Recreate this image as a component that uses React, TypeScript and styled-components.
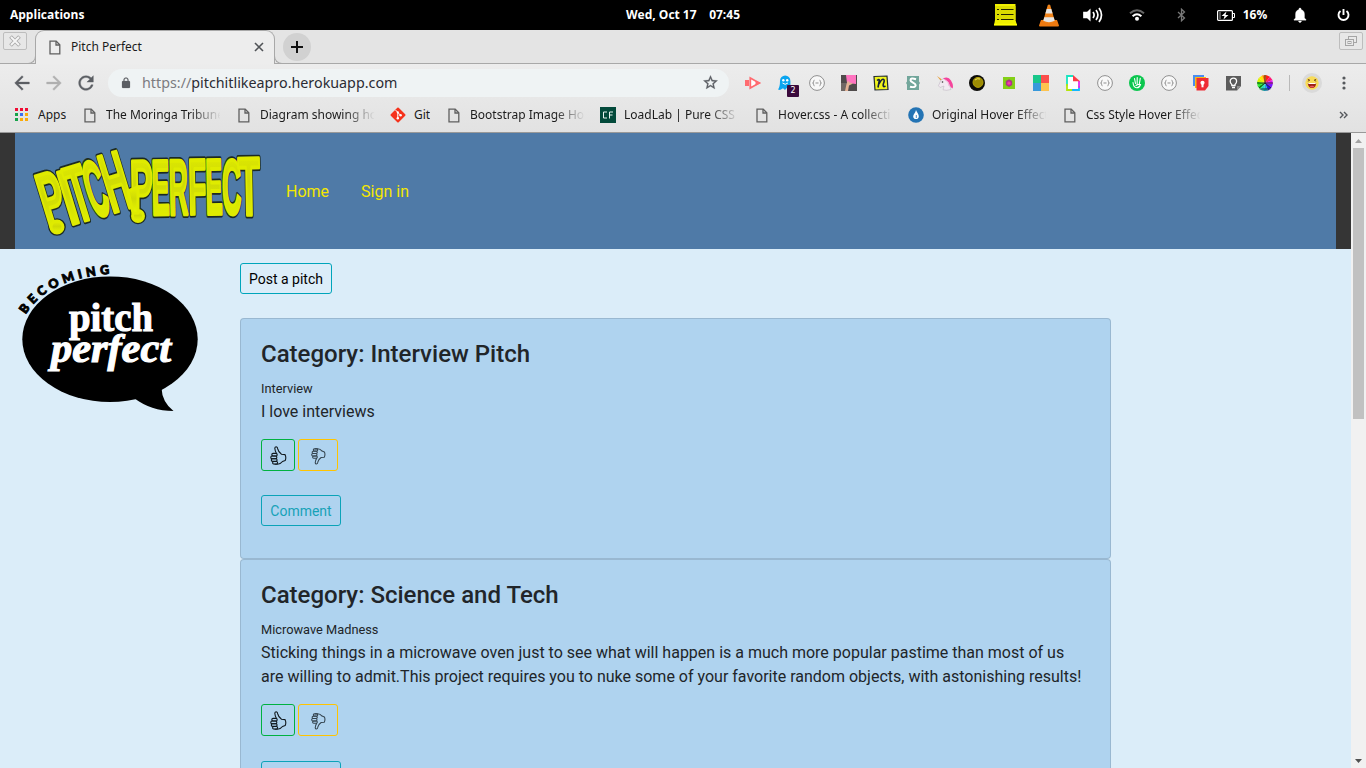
import React from "react";
import styled, { createGlobalStyle } from "styled-components";

const GlobalStyle = createGlobalStyle`
  *, *::before, *::after { box-sizing: border-box; }
  html, body { margin: 0; padding: 0; height: 768px; overflow: hidden; }
  body { font-family: Roboto, "Liberation Sans", sans-serif; font-size: 16px; line-height: 1.5; color: #212529; }
  svg { display: block; flex: none; }
  p, h4 { margin: 0; }
`;

const Screen = styled.div`
  width: 1366px;
  height: 768px;
  display: flex;
  flex-direction: column;
  overflow: hidden;
`;

/* ---------- desktop panel ---------- */

const Panel = styled.header`
  flex: none;
  height: 30px;
  display: grid;
  grid-template-columns: 1fr 114px 1fr;
  align-items: center;
  background: #000;
  color: #fff;
  font: 700 12px/30px "Open Sans", "Noto Sans", sans-serif;
`;
const PanelMenu = styled.div`
  padding-left: 10px;
`;
const Clock = styled.div`
  display: flex;
  justify-content: space-between;
  white-space: nowrap;
`;
const Tray = styled.div`
  display: flex;
  justify-content: flex-end;
`;
const TraySlot = styled.div<{ $w: number }>`
  width: ${(p) => p.$w}px;
  height: 30px;
  display: flex;
  align-items: center;
  justify-content: center;
  gap: 8px;
`;

/* ---------- browser chrome ---------- */

const Browser = styled.div`
  flex: none;
  height: 103px;
  background: linear-gradient(#ededed 30px, #e2e2e2);
  border-bottom: 1px solid #999;
  font-family: "Noto Sans", "Open Sans", sans-serif;
  color: #1b1b1b;
`;
const TabStrip = styled.div`
  height: 34px;
  display: flex;
  background: #e4e4e4;
  border-bottom: 1px solid #a8a8a8;
`;
const WindowButton = styled.div`
  width: 24px;
  height: 18px;
  margin: 2px 3px 0;
  border: 1px solid #bdbdbd;
  border-radius: 2px;
  display: flex;
  align-items: center;
  justify-content: center;
  background: #e7e7e7;
`;
const Tab = styled.div`
  position: relative;
  width: 240px;
  height: 34px;
  margin-left: 5px;
  padding: 0 10px 1px 13px;
  display: flex;
  align-items: center;
  border: 1px solid #a8a8a8;
  border-bottom: 0;
  border-radius: 9px 9px 0 0;
  background: #ededed;
  font-size: 12px;

  &::before,
  &::after {
    content: "";
    position: absolute;
    bottom: 0;
    width: 8px;
    height: 8px;
    border-bottom: 1px solid #a8a8a8;
    background: transparent;
  }
  &::before {
    left: -8px;
    border-right: 1px solid #a8a8a8;
    border-bottom-right-radius: 8px;
  }
  &::after {
    right: -8px;
    border-left: 1px solid #a8a8a8;
    border-bottom-left-radius: 8px;
  }
`;
const TabTitle = styled.span`
  flex: 1;
  margin-left: 10px;
`;
const NewTab = styled.div`
  width: 28px;
  height: 28px;
  margin: 3px auto 0 8px;
  border-radius: 50%;
  background: #d1d1d1;
  display: flex;
  align-items: center;
  justify-content: center;
`;
const Toolbar = styled.div`
  height: 37px;
  display: flex;
  align-items: center;
`;
const NavButtons = styled.div`
  width: 108px;
  padding-left: 11px;
  display: flex;
  gap: 10px;
`;
const AddressBar = styled.div`
  width: 621px;
  height: 28px;
  margin-right: 8px;
  padding: 0 10px 0 12px;
  border-radius: 14px;
  background: #eff3f4;
  display: flex;
  align-items: center;
  font-size: 14.3px;
  line-height: 28px;
`;
const Url = styled.span`
  flex: 1;
  margin-left: 10px;
  white-space: nowrap;
  color: #2b2b33;
  i {
    font-style: normal;
    color: #7b7b80;
  }
`;
const Extension = styled.div`
  position: relative;
  width: 32px;
  height: 28px;
  display: flex;
  align-items: center;
  justify-content: center;
`;
const Badge = styled.span`
  position: absolute;
  left: 18px;
  top: 16px;
  width: 12px;
  height: 12px;
  border-radius: 1px;
  background: #3a0a3c;
  color: #fff;
  font: 8px/12px "DejaVu Sans", sans-serif;
  text-align: center;
`;
const Divider = styled.div`
  width: 1px;
  height: 16px;
  margin-left: 8px;
  background: #b9b9b9;
`;
const Avatar = styled.div`
  width: 20px;
  height: 20px;
  margin: 0 20px 0 12px;
  border-radius: 50%;
  background: #dadada;
  display: flex;
  align-items: center;
  justify-content: center;
`;
const Bookmarks = styled.div`
  height: 28px;
  padding: 0 18px 0 14px;
  display: flex;
  align-items: center;
  gap: 16px;
`;
const Bookmark = styled.div<{ $w: number; $fade?: boolean }>`
  display: flex;
  align-items: center;
  gap: 8px;
  span {
    width: ${(p) => p.$w}px;
    overflow: hidden;
    white-space: nowrap;
    font-size: 12px;
    line-height: 20px;
    ${(p) => p.$fade && "mask-image: linear-gradient(to right, #000 84px, transparent 115px);"}
  }
`;
const BookmarkIcon = styled.div`
  width: 16px;
  display: flex;
  justify-content: center;
`;
const More = styled.div`
  margin-left: auto;
`;

/* ---------- web page ---------- */

const Viewport = styled.div`
  flex: 1;
  min-height: 0;
  display: flex;
`;
const Page = styled.div`
  width: 1351px;
  overflow: hidden;
  background: #dbedf9;
`;
const NavFrame = styled.div`
  padding: 0 15px;
  background: #353535;
`;
const Navbar = styled.nav`
  height: 116px;
  padding-left: 16px;
  display: flex;
  align-items: center;
  background: #4f7aa7;
`;
const NavLink = styled.a`
  margin-left: 32px;
  padding-top: 2px;
  color: #f5e700;
`;
const Content = styled.main`
  display: flex;
`;
const Side = styled.aside`
  width: 240px;
`;
const Pitches = styled.section`
  width: 871px;
  padding-top: 14px;
`;
const Button = styled.button<{ $border: string; $color?: string; $w?: number }>`
  display: block;
  width: ${(p) => p.$w}px;
  height: 31px;
  padding: 2px 0 0;
  border: 1px solid ${(p) => p.$border};
  border-radius: 3px;
  background: transparent;
  color: ${(p) => p.$color ?? "#000"};
  font: 400 14px/21px Roboto, sans-serif;
`;
const VoteButton = styled(Button)`
  height: 32.3px;
  padding: 1px 0 0;
  display: flex;
  align-items: center;
  justify-content: center;
`;
const Card = styled.article`
  height: 241.1px;
  padding: 21px 20px 20px;
  border: 1px solid rgba(0, 0, 0, 0.125);
  border-radius: 4px;
  background: #afd3ef;
  & + & {
    height: 265px;
  }
`;
const CardList = styled.div`
  margin-top: 24.4px;
`;
const Title = styled.h4`
  margin-bottom: 8px;
  font-size: 24px;
  font-weight: 500;
  line-height: 28.8px;
`;
const Subject = styled.p`
  height: 23px;
  font-size: 12.8px;
  line-height: 24px;
`;
const Votes = styled.div`
  display: flex;
  gap: 3px;
  margin: 14.9px 0 24.05px;
`;

const ScrollTrack = styled.div`
  width: 15px;
  background: #f1f1f1;
  display: flex;
  flex-direction: column;
  align-items: center;
`;
const ScrollArrow = styled.div`
  height: 15px;
  display: flex;
  align-items: center;
`;
const ScrollThumb = styled.div`
  width: 11px;
  height: 271px;
  margin-bottom: auto;
  background: #c1c1c1;
`;

/* ---------- drawings ---------- */

const Glyph = ({ d, size, fill = "#5b5e63" }: { d: string; size: number; fill?: string }) => (
  <svg width={size} height={size} viewBox="0 0 24 24">
    <path d={d} fill={fill} stroke={fill} strokeWidth="0.4" />
  </svg>
);

const PATHS = {
  back: "M20 11H7.83l5.59-5.59L12 4l-8 8 8 8 1.41-1.41L7.83 13H20v-2z",
  forward: "M12 4l-1.41 1.41L16.17 11H4v2h12.17l-5.58 5.59L12 20l8-8z",
  reload:
    "M17.65 6.35C16.2 4.9 14.21 4 12 4c-4.42 0-7.99 3.58-7.99 8s3.57 8 7.99 8c3.73 0 6.84-2.55 7.73-6h-2.08c-.82 2.33-3.04 4-5.65 4-3.31 0-6-2.69-6-6s2.69-6 6-6c1.66 0 3.14.69 4.22 1.78L13 11h7V4l-2.35 2.35z",
  lock: "M18 8h-1V6c0-2.76-2.24-5-5-5S7 3.24 7 6v2H6c-1.1 0-2 .9-2 2v10c0 1.1.9 2 2 2h12c1.1 0 2-.9 2-2V10c0-1.1-.9-2-2-2zM15.1 8H8.9V6c0-1.71 1.39-3.1 3.1-3.1s3.1 1.39 3.1 3.1v2z",
  star: "M22 9.24l-7.19-.62L12 2 9.19 8.63 2 9.24l5.46 4.73L5.82 21 12 17.27 18.18 21l-1.63-7.03L22 9.24zM12 15.4l-3.76 2.27 1-4.28-3.32-2.88 4.38-.38L12 6.1l1.71 4.04 4.38.38-3.32 2.88 1 4.28L12 15.4z",
  bell: "M12 22c1.1 0 2-.9 2-2h-4c0 1.1.89 2 2 2zm6-6v-5c0-3.07-1.64-5.64-4.5-6.32V4c0-.83-.67-1.5-1.5-1.5s-1.5.67-1.5 1.5v.68C7.63 5.36 6 7.92 6 11v5l-2 2v1h16v-1l-2-2z",
};

const FileIcon = () => (
  <svg width="12" height="15" viewBox="0 0 12 15" fill="none" stroke="#5f5f5f" strokeWidth="1.3">
    <path d="M1 1.2h6.2l3.6 3.6v9H1z" />
    <path d="M7 1.2v3.8h3.8" />
  </svg>
);

const AppsIcon = () => (
  <svg width="14" height="14" viewBox="0 0 14 14" shapeRendering="crispEdges">
    {["#f00c34", "#f00c34", "#f00c34", "#17a34a", "#3c6ff0", "#fbab09", "#17a34a", "#fbab09", "#fbab09"].map((c, i) => (
      <rect key={i} x={(i % 3) * 5} y={Math.floor(i / 3) * 5} width="3" height="3" fill={c} />
    ))}
  </svg>
);

const GitIcon = () => (
  <svg width="16" height="16" viewBox="0 0 16 16">
    <rect x="2.4" y="2.4" width="11.2" height="11.2" rx="1" fill="#f5321c" transform="rotate(45 8 8)" />
    <path d="M5.5 3l2.3 2.4v6M7.8 5.6l2.8 2.6" stroke="#fff" fill="none" />
    <circle cx="7.8" cy="11.2" r="1.2" fill="#fff" />
    <circle cx="10.6" cy="8.2" r="1.2" fill="#fff" />
    <circle cx="7.8" cy="5.3" r="1.1" fill="#fff" />
  </svg>
);

const CfIcon = () => (
  <svg width="16" height="16" viewBox="0 0 16 16">
    <rect width="16" height="16" fill="#034a3b" />
    <path d="M7 5H3.5v6H7M9.5 11.5V5H13M9.5 8H12.5" stroke="#e7f2ef" fill="none" />
  </svg>
);

const DropIcon = () => (
  <svg width="16" height="16" viewBox="0 0 16 16">
    <circle cx="8" cy="8" r="7.8" fill="#2474b4" />
    <path d="M8 3C9 5.500 10.800 7 10.800 9.300a2.800 2.800 0 0 1-5.600 0C5.200 7.500 7.500 6 8 3z" fill="#fff" />
    <path d="M8.300 8v3" stroke="#2474b4" strokeWidth="0.8" />
  </svg>
);

const BracesIcon = () => (
  <svg width="16" height="16" viewBox="0 0 16 16" fill="none" stroke="#8f8f8f">
    <circle cx="8" cy="8" r="7.4" fill="#f8f8f8" />
    <path d="M5.500 5.200Q4.500 5.200 4.600 6.700Q4.600 8 3.600 8Q4.600 8 4.600 9.300Q4.500 10.800 5.500 10.800M10.500 5.200Q11.500 5.200 11.400 6.700Q11.400 8 12.400 8Q11.400 8 11.400 9.300Q11.500 10.800 10.500 10.800M6.500 8h3" />
  </svg>
);

const extensionIcons: React.ReactNode[] = [
  <svg width="16" height="14" viewBox="0 0 16 14">
    <path d="M0 4h4v6H0z" fill="#ff6b70" />
    <path d="M5.300 2l9 5-9 5z" fill="#fff" stroke="#ff6b70" strokeWidth="1.8" />
    <path d="M10.500 4.500L16 7l-5.500 2.800z" fill="#ff6b70" />
  </svg>,
  <svg width="16" height="16" viewBox="0 0 16 16">
    <path d="M3 15l-2-.6Q3 12 3 6a5.200 5.500 0 0 1 10.400 0v7l-2 2-1.700-2-1.700 2-2-1.700z" fill="#0aa5f0" />
    <circle cx="6.300" cy="5.200" r="1.2" fill="#fff" />
    <circle cx="10.200" cy="5.200" r="1.2" fill="#fff" />
    <path d="M5.500 8q2.700 2.600 5.400 0" stroke="#fff" fill="none" />
  </svg>,
  <BracesIcon />,
  <svg width="16" height="16" viewBox="0 0 16 16">
    <rect width="16" height="16" fill="#4f4a4b" />
    <path d="M0 8h6L7 16H0z" fill="#6f6764" />
    <path d="M5 0h10v9l-9-1z" fill="#ff74c0" />
    <path d="M4 16l1.500-7L7 5.500l1.500 2 3.500 1-4 2L7 16z" fill="#e3b296" />
  </svg>,
  <svg width="16" height="16" viewBox="0 0 16 16">
    <path d="M1 1.500L14 1l1 13.500-13 .5z" fill="#f0f51c" stroke="#232b30" strokeWidth="1.2" />
    <path d="M4 5.500Q6.500 3.500 6.300 5.500L5 12.500M6 9Q8.500 4 10.300 4.300T10.300 9Q9.500 12.800 12.500 11" fill="none" stroke="#15203a" strokeWidth="1.6" />
  </svg>,
  <svg width="14" height="16" viewBox="0 0 14 16">
    <path d="M1 1h12v5.500L14 8l-1 1.500V15H1V9.500L0 8l1-1.500z" fill="#72a69b" />
    <path d="M10 4.200Q4.500 2.500 4.500 5.200C4.500 7.500 9.700 7.700 9.700 10.300Q9.500 13 4 11.700" stroke="#fff" strokeWidth="2" fill="none" />
  </svg>,
  <svg width="16" height="16" viewBox="0 0 16 16">
    <path d="M0 1l5 3.500-1.500 1z" fill="#e8a13c" />
    <path d="M4 5l3-1.500 4 3 3 8q-5 1.500-8 .3L7 11l-4 1.500-1.500-1.800z" fill="#f2e9f1" stroke="#b9aebd" strokeWidth=".5" />
    <path d="M6 3.500Q11 .5 14 5.500T15.500 13.500Q13.500 13 12.500 9.500T6 3.500z" fill="#f5459c" />
    <path d="M8 5Q12 6 12 11" stroke="#f7b5dd" fill="none" />
    <circle cx="5.500" cy="7" r=".8" fill="#333" />
  </svg>,
  <svg width="16" height="16" viewBox="0 0 16 16">
    <circle cx="8" cy="8" r="8" fill="#0b0b08" />
    <circle cx="9" cy="7.400" r="5" fill="#9c8c04" stroke="#b3a008" />
    <path d="M6 5Q8 3 11 4" stroke="#eee261" fill="none" />
  </svg>,
  <svg width="12" height="12" viewBox="0 0 12 12">
    <rect width="12" height="12" fill="#83d016" />
    <path d="M6 2.200L9.200 4v4L6 10 2.800 8V4z" fill="#a63d7e" />
    <circle cx="6" cy="6.300" r="2.100" fill="#e824b0" />
    <circle cx="6" cy="6" r="0.6" fill="#ffd34a" />
  </svg>,
  <svg width="16" height="16" viewBox="0 0 16 16">
    <path d="M0 0h8v8H0z" fill="#18c78a" />
    <path d="M8 0h8v8H8z" fill="#fb504d" />
    <path d="M0 8h8v8H0z" fill="#3798db" />
    <path d="M8 8h8v8H8z" fill="#fdc34f" />
  </svg>,
  <svg width="14" height="16" viewBox="0 0 14 16">
    <path d="M1 1h7l5 5v9H1z" fill="#fff" />
    <path d="M1 11V1h6" stroke="#18e5c0" strokeWidth="1.8" fill="none" />
    <path d="M1 9v6h5" stroke="#b4e50c" strokeWidth="1.8" fill="none" />
    <path d="M6 15h7v-4" stroke="#12b8ff" strokeWidth="1.8" fill="none" />
    <path d="M13 13V6" stroke="#e528ef" strokeWidth="1.8" />
    <path d="M7 0l7 6.200H7z" fill="#fc3b45" />
  </svg>,
  <BracesIcon />,
  <svg width="16" height="16" viewBox="0 0 16 16">
    <circle cx="8" cy="8" r="8" fill="#0bc64e" />
    <path d="M5.500 3.500l1 5M8.200 2.500v6M11.300 3.200l-1 6M4 7.500Q4.500 12.500 7.500 12.700T11.500 9.500Q8.500 9 7 10.500" stroke="#fff" strokeWidth="1.1" fill="none" strokeLinecap="round" />
  </svg>,
  <BracesIcon />,
  <svg width="16" height="16" viewBox="0 0 16 16">
    <path d="M0 0h11v11H0z" fill="#4a8df0" />
    <path d="M2 2h11v11H2z" fill="#fbb715" />
    <path d="M3.500 3H15.500v8l-3.500 4.500H3.500z" fill="#ee2c35" />
    <circle cx="9.500" cy="7.800" r="2.1" fill="#fff" />
    <path d="M8.500 9h2v3.300h-2z" fill="#fff" />
  </svg>,
  <svg width="16" height="16" viewBox="0 0 16 16">
    <path d="M1 1h15v10l-4 4.500H1z" fill="#5c5c5c" />
    <path d="M16 11l-4 4.500V11z" fill="#8f8f8f" />
    <path d="M6.800 9.500Q5.200 8.200 5.200 6.300a3.200 3.200 0 0 1 6.400 0q0 1.900-1.600 3.200v1H6.800zM7 12.500h3" fill="none" stroke="#fff" strokeWidth="1.3" />
  </svg>,
  <svg width="16" height="16" viewBox="0 0 16 16">
    {["#ff1a1a", "#ff1478", "#e015f5", "#7a14ff", "#2418e8", "#12a8d8", "#1fd8c0", "#12d62c", "#27e81b", "#d5f500", "#ffe600", "#ff7b00"].map((c, i) => {
      const a = (i * Math.PI) / 6 - Math.PI / 2.2;
      const b = a + Math.PI / 6;
      return <path key={i} d={`M8 8L${8 + 8 * Math.cos(a)} ${8 + 8 * Math.sin(a)}L${8 + 8 * Math.cos(b)} ${8 + 8 * Math.sin(b)}z`} fill={c} />;
    })}
    <path d="M8 8L2 13M8 8l6 5M8 8V0M8 8H0M8 8h8" stroke="#161616" strokeWidth=".8" />
    <path d="M2 14l3 1.500h6l3-1.500-3-1H5z" fill="#222" opacity=".45" />
  </svg>,
];

const Emoji = () => (
  <svg width="14" height="14" viewBox="0 0 14 14">
    <circle cx="7" cy="7" r="6.7" fill="#f8dc58" />
    <path d="M2.800 3.300l2 .9-2 1M11.200 3.300l-2 .9 2 1" stroke="#6b3b12" fill="none" strokeWidth=".9" />
    <path d="M2.800 7h8.400q-.3 5-4.200 5T2.800 7z" fill="#9c2317" />
    <path d="M3.300 7h7.400v1H3.300z" fill="#fff" />
    <path d="M4.500 10.500q2.500-1.500 5 0-2.500 2-5 0z" fill="#f05a5e" />
  </svg>
);

const NotesIcon = () => (
  <svg width="23" height="22" viewBox="0 0 23 22">
    <path d="M1 0h20.500v16l1.500 5.500H0L1 16z" fill="#f0f000" />
    <path d="M1 2h20.500v14H1z" fill="#dcdc00" />
    <path d="M3 5.500h2M7 5.500h12.500M3 10.500h2M7 10.500h12.500M3 15.500h2M7 15.500h12.500" stroke="#222200" strokeWidth="1.2" />
    <path d="M0 20.500h23" stroke="#ff0" strokeWidth="1.5" />
  </svg>
);
const ConeIcon = () => (
  <svg width="20" height="23" viewBox="0 0 20 23">
    <path d="M2 16h16l2 5.500q0 1-1 1H1q-1 0-1-1z" fill="#ee7a10" />
    <path d="M8.800 1q1.200-1 2.400 0L16 17.500q-6 3.500-12 0z" fill="#f08218" />
    <path d="M7.700 5h4.600l1.300 4.500H6.400zM5.300 13.200h9.400l1 3.600q-5.700 2.700-11.400 0z" fill="#e6e6e6" />
  </svg>
);
const VolumeIcon = () => (
  <svg width="20" height="16" viewBox="0 0 20 16" fill="none" stroke="#fff" strokeWidth="1.7">
    <path d="M1 5.500h2.500L7.500 1.500v13L3.500 10.500H1z" fill="#fff" stroke="none" />
    <path d="M1 5.500v5h3v-5z" fill="#fff" />
    <path d="M10 5q2.200 3 0 6M13 3q3.800 5 0 10M16 1q5 7 0 14" />
  </svg>
);
const WifiIcon = () => (
  <svg width="16" height="12" viewBox="0 0 16 12" fill="none" strokeWidth="2">
    <path d="M1 4.300Q8-1.800 15 4.300" stroke="#666" />
    <path d="M3.600 7.200Q8 3.400 12.400 7.200" stroke="#fff" />
    <circle cx="8" cy="9.700" r="2" fill="#fff" />
  </svg>
);
const BluetoothIcon = () => (
  <svg width="9" height="14" viewBox="0 0 9 14" fill="none" stroke="#777" strokeWidth="1.3">
    <path d="M1 4l6.500 6L4.500 12.800V1.200L7.500 4 1 10" />
  </svg>
);
const BatteryIcon = () => (
  <svg width="18" height="11" viewBox="0 0 18 11">
    <rect x=".6" y=".6" width="14.8" height="9.8" rx="1" fill="none" stroke="#fff" strokeWidth="1.2" />
    <path d="M16 3.500h1.500v4H16" stroke="#fff" fill="none" />
    <path d="M2 2h2v7H2z" fill="#555" />
    <path d="M9.500 1.500L4.500 6h3L6.500 9.500 11.500 5h-3z" fill="#fff" />
  </svg>
);
const PowerIcon = () => (
  <svg width="13" height="14" viewBox="0 0 13 14" fill="none" stroke="#fff" strokeWidth="1.9">
    <path d="M3.500 3a5 5 0 1 0 6 0M6.500 1v6" />
  </svg>
);

/* letter, lower-left corner (x, y), rotation, horizontal and vertical scale */
const letters: [string, number, number, number, number, number][] = [
  ["P", 48, 95, -17, 0.46, 0.99],
  ["I", 70, 92, -17, 0.56, 1],
  ["T", 77, 90, -17, 0.43, 1.03],
  ["C", 94, 85, -17, 0.35, 1.02],
  ["H", 112, 80, -17, 0.44, 1.07],
  ["P", 130.5, 81.5, -1, 0.44, 0.99],
  ["E", 152, 81.5, -1, 0.345, 0.99],
  ["R", 169.2, 81.5, -1, 0.34, 1],
  ["F", 188.8, 81, -1, 0.38, 1],
  ["E", 206, 81, -1, 0.325, 1],
  ["C", 222.5, 81, -1, 0.34, 0.99],
  ["T", 238.5, 82, -1, 0.46, 1.05],
];

const LetterLayer = ({ stroke, width, fill }: { stroke: string; width: number; fill: string }) => (
  <g fill={fill} stroke={stroke} strokeWidth={width} strokeLinejoin="round" fontFamily="Liberation Sans, sans-serif" fontWeight="700" fontSize="78">
    {letters.map(([ch, x, y, r, sx, sy], i) => (
      <text key={i} transform={`translate(${x} ${y}) rotate(${r}) scale(${sx} ${sy})`} vectorEffect="non-scaling-stroke">
        {ch}
      </text>
    ))}
    <circle cx="57" cy="94" r="6" />
    <circle cx="138" cy="83" r="5.500" />
    <path d="M128 58l10-4v26h-5z" />
  </g>
);

const BrandLogo = () => (
  <svg width="223" height="116" viewBox="0 0 223 116" overflow="visible">
    <defs>
      <linearGradient id="gold" x1="0" y1="0" x2="0" y2="1">
        <stop offset="0" stopColor="#e4ef00" />
        <stop offset=".45" stopColor="#cfda05" />
        <stop offset="1" stopColor="#e6f700" />
      </linearGradient>
    </defs>
    <g transform="translate(-31 0)">
      <LetterLayer stroke="#1c2a22" width={5.6} fill="#1c2a22" />
      <LetterLayer stroke="#dfeb00" width={3} fill="url(#gold)" />
    </g>
  </svg>
);

const BubbleLogo = () => (
  <svg width="240" height="180" viewBox="0 249 240 180">
    <defs>
      <path id="arc" d="M25.500 314.500C40 292 66 276 116 273.500" />
    </defs>
    <ellipse cx="110" cy="339.200" rx="87.700" ry="62.800" />
    <path d="M134 398Q151 411 173.500 411Q162 402 161.500 388z" />
    <text fontFamily="Lato, sans-serif" fontWeight="900" fontSize="12.500" stroke="#000" strokeWidth=".9">
      <textPath href="#arc" textLength="97" lengthAdjust="spacing">
        BECOMING
      </textPath>
    </text>
    <g fill="#fff" stroke="#fff" strokeWidth="1.100" fontFamily="Liberation Serif, serif" fontWeight="700" fontSize="40">
      <text x="69" y="330.500" textLength="84" lengthAdjust="spacingAndGlyphs">
        pitch
      </text>
      <text x="51" y="361.500" fontStyle="italic" textLength="120" lengthAdjust="spacingAndGlyphs">
        perfect
      </text>
    </g>
  </svg>
);

const Thumb = () => (
  <>
    <path d="M6.500 7.500Q5 5 4.800 2.200Q5 .8 6.200.8Q7.600 1 7.800 3.200Q8.300 6 11.500 8.200L15 8.600Q16.500 11.500 15.200 14.500L12.500 15.500Q10.500 18.200 7.500 18.200H4.500" />
    <rect x="1.800" y="7.400" width="5.400" height="2.600" rx="1.300" />
    <rect x=".8" y="10" width="6" height="2.700" rx="1.300" />
    <rect x="1.300" y="12.800" width="5.800" height="2.600" rx="1.300" />
    <rect x="2.600" y="15.500" width="5" height="2.500" rx="1.200" />
  </>
);
const ThumbUp = () => (
  <svg width="17" height="19" viewBox="0 0 17 19" fill="none" stroke="#10181e" strokeWidth="1.1" strokeLinejoin="round">
    <Thumb />
  </svg>
);
const ThumbDown = () => (
  <svg width="15" height="19" viewBox="0 0 17 19" fill="none" stroke="#34444f" strokeWidth="1.2" strokeLinejoin="round">
    <g transform="matrix(1 0 0 -1 0 20)">
      <Thumb />
    </g>
  </svg>
);

/* ---------- content ---------- */

const bookmarks: { label: string; icon: React.ReactNode; w: number }[] = [
  { label: "Apps", icon: <AppsIcon />, w: 28 },
  { label: "The Moringa Tribune", icon: <FileIcon />, w: 114 },
  { label: "Diagram showing how", icon: <FileIcon />, w: 114 },
  { label: "Git", icon: <GitIcon />, w: 16 },
  { label: "Bootstrap Image Hove", icon: <FileIcon />, w: 114 },
  { label: "LoadLab | Pure CSS L", icon: <CfIcon />, w: 114 },
  { label: "Hover.css - A collecti", icon: <FileIcon />, w: 114 },
  { label: "Original Hover Effect", icon: <DropIcon />, w: 114 },
  { label: "Css Style Hover Effec", icon: <FileIcon />, w: 114 },
];

const pitches = [
  { category: "Interview Pitch", subject: "Interview", text: "I love interviews" },
  {
    category: "Science and Tech",
    subject: "Microwave Madness",
    text: "Sticking things in a microwave oven just to see what will happen is a much more popular pastime than most of us are willing to admit.This project requires you to nuke some of your favorite random objects, with astonishing results!",
  },
];

export default function App() {
  return (
    <Screen>
      <GlobalStyle />
      <Panel>
        <PanelMenu>Applications</PanelMenu>
        <Clock>
          <span>Wed, Oct 17</span>
          <span>07:45</span>
        </Clock>
        <Tray>
          <TraySlot $w={46}><NotesIcon /></TraySlot>
          <TraySlot $w={42}><ConeIcon /></TraySlot>
          <TraySlot $w={46}><VolumeIcon /></TraySlot>
          <TraySlot $w={42}><WifiIcon /></TraySlot>
          <TraySlot $w={46}><BluetoothIcon /></TraySlot>
          <TraySlot $w={76}><BatteryIcon />16%</TraySlot>
          <TraySlot $w={40}><Glyph d={PATHS.bell} size={18} fill="#fff" /></TraySlot>
          <TraySlot $w={46}><PowerIcon /></TraySlot>
        </Tray>
      </Panel>

      <Browser>
        <TabStrip>
          <WindowButton>
            <svg width="12" height="12" viewBox="0 0 12 12" fill="none">
              <path d="M1.500 1.500l9 9M10.500 1.500l-9 9" stroke="#aaa" strokeWidth="3.8" />
              <path d="M2 2l8 8M10 2L2 10" stroke="#f6f6f6" strokeWidth="1.9" />
            </svg>
          </WindowButton>
          <Tab>
            <FileIcon />
            <TabTitle>Pitch Perfect</TabTitle>
            <svg width="10" height="10" viewBox="0 0 10 10"><path d="M1 1l8 8M9 1L1 9" stroke="#505357" strokeWidth="1.6" /></svg>
          </Tab>
          <NewTab>
            <svg width="12" height="12" viewBox="0 0 12 12"><path d="M6 0v12M0 6h12" stroke="#111" strokeWidth="2" /></svg>
          </NewTab>
          <WindowButton>
            <svg width="12" height="12" viewBox="0 0 12 12" fill="#e9e9e9" stroke="#a5a5a5">
              <rect x="3.500" y="1.500" width="8" height="6" />
              <rect x=".5" y="4.500" width="8" height="6" />
              <rect x="3" y="6.500" width="3" height="2" />
            </svg>
          </WindowButton>
        </TabStrip>
        <Toolbar>
          <NavButtons>
            <Glyph d={PATHS.back} size={22} />
            <Glyph d={PATHS.forward} size={22} fill="#b0b0b0" />
            <Glyph d={PATHS.reload} size={22} />
          </NavButtons>
          <AddressBar>
            <Glyph d={PATHS.lock} size={12} />
            <Url><i>https://</i>pitchitlikeapro.herokuapp.com</Url>
            <Glyph d={PATHS.star} size={17} />
          </AddressBar>
          {extensionIcons.map((icon, i) => (
            <Extension key={i}>
              {icon}
              {i === 1 && <Badge>2</Badge>}
            </Extension>
          ))}
          <Divider />
          <Avatar><Emoji /></Avatar>
          <svg width="4" height="14" viewBox="0 0 4 14" fill="#55585c">
            <circle cx="2" cy="2" r="1.6" /><circle cx="2" cy="7" r="1.6" /><circle cx="2" cy="12" r="1.6" />
          </svg>
        </Toolbar>
        <Bookmarks>
          {bookmarks.map((b) => (
            <Bookmark key={b.label} $w={b.w} $fade={b.w > 100}>
              <BookmarkIcon>{b.icon}</BookmarkIcon>
              <span>{b.label}</span>
            </Bookmark>
          ))}
          <More>
            <svg width="9" height="8" viewBox="0 0 9 8" fill="none" stroke="#55585c" strokeWidth="1.4"><path d="M1 1l3 3-3 3M5 1l3 3-3 3" /></svg>
          </More>
        </Bookmarks>
      </Browser>

      <Viewport>
        <Page>
          <NavFrame>
            <Navbar>
              <BrandLogo />
              <NavLink>Home</NavLink>
              <NavLink>Sign in</NavLink>
            </Navbar>
          </NavFrame>
          <Content>
            <Side><BubbleLogo /></Side>
            <Pitches>
              <Button $w={92} $border="#00a5bb">Post a pitch</Button>
              <CardList>
                {pitches.map((p) => (
                  <Card key={p.category}>
                    <Title>Category: {p.category}</Title>
                    <Subject>{p.subject}</Subject>
                    <p>{p.text}</p>
                    <Votes>
                      <VoteButton $w={34} $border="#00b140"><ThumbUp /></VoteButton>
                      <VoteButton $w={40} $border="#ffc400"><ThumbDown /></VoteButton>
                    </Votes>
                    <Button $w={80} $border="#0ba3b8" $color="#17a2b8">Comment</Button>
                  </Card>
                ))}
              </CardList>
            </Pitches>
          </Content>
        </Page>
        <ScrollTrack>
          <ScrollArrow>
            <svg width="7" height="4" viewBox="0 0 7 4"><path d="M0 4L3.500 0 7 4z" fill="#a3a3a3" /></svg>
          </ScrollArrow>
          <ScrollThumb />
          <ScrollArrow>
            <svg width="7" height="4" viewBox="0 0 7 4"><path d="M0 0h7L3.500 4z" fill="#505050" /></svg>
          </ScrollArrow>
        </ScrollTrack>
      </Viewport>
    </Screen>
  );
}
